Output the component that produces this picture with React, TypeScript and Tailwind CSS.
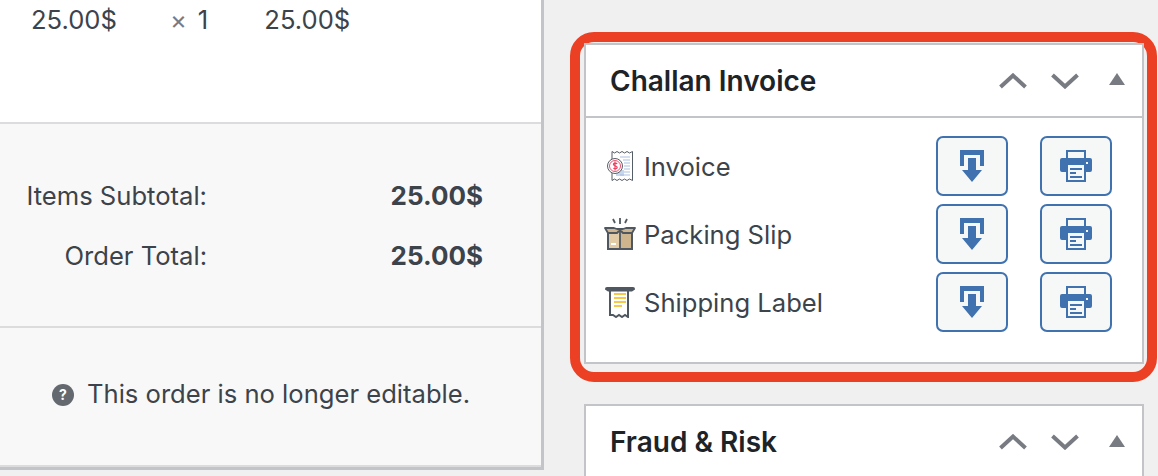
// ─── Icons ───────────────────────────────────────────────────────────────────

function DownloadIcon() {
  return (
    <svg width="24" height="32" viewBox="0 0 24 32">
      <path d="M0 0h24v16h-4V5H4v11H0z" fill="#3f72af" />
      <path d="M8 8h8v12h6L12 32 2 20h6z" fill="#3f72af" />
    </svg>
  )
}

function PrinterIcon() {
  return (
    <svg width="32" height="32" viewBox="0 0 32 32">
      <path d="M6 0h20v8h-2V2H8v6H6z" fill="#3f72af" />
      <path d="M2 8h28a2 2 0 0 1 2 2v10a2 2 0 0 1-2 2h-4v-7H6v7H2a2 2 0 0 1-2-2V10a2 2 0 0 1 2-2z" fill="#3f72af" />
      <rect x="26" y="12" width="2" height="2" fill="#f6f7f7" />
      <path d="M6 13h20v19H6z" fill="#3f72af" />
      <path d="M8 15h16v15H8z" fill="#f6f7f7" />
      <path d="M10 18h12v2H10zM10 22h6v2h-6zM10 26h12v2H10z" fill="#3f72af" />
    </svg>
  )
}

function InvoiceIcon() {
  return (
    <svg width="26" height="32" viewBox="0 0 26 32" fill="none">
      <path d="M5 1.500l2.500 1.500L10 1.500l2.500 1.500L15 1.500l2.500 1.500L20 1.500l2.500 1.500 3-1.500v29l-3-1.500-2.500 1.500-2.500-1.500-2.500 1.500-2.500-1.500L10 30.500l-2.500-1.500L5 30.500z" fill="#fff" stroke="#555d66" strokeWidth="1" />
      <path d="M9 20h8v6H9z" fill="#c6d6ec" />
      <path d="M13 7h10M16 10h7M17 13h6M17 16h6M17 19h6M17 22h6M13 25h10" stroke="#a9bfdf" strokeWidth="1" />
      <circle cx="8" cy="16" r="7.500" fill="#fff" stroke="#555d66" strokeWidth="1" />
      <circle cx="8" cy="16" r="5.500" fill="#fff" stroke="#ee5470" strokeWidth="1" />
      <path d="M10.200 13.800c-.8-1-3.800-1-3.800.6s3.800 1 3.800 2.900-3 1.700-3.800.7M8 11.500v9" stroke="#ee3f5f" strokeWidth="1.200" />
    </svg>
  )
}

function BoxIcon() {
  return (
    <svg width="32" height="32" viewBox="0 0 32 32" fill="none">
      <path d="M16 0v6M9 1l2 4M23 1l-2 4" stroke="#4f5760" strokeWidth="1.800" />
      <path d="M4 11h13v20H4z" fill="#e2cba7" />
      <path d="M17 11h11v20H17z" fill="#cfb58e" />
      <path d="M4 11h24v20H4z" stroke="#4f5760" strokeWidth="2" />
      <path d="M1 10h9l6 2 6-2h9l-3 5h-9l-3-3-3 3H4z" fill="#cfb58e" stroke="#4f5760" strokeWidth="1.800" strokeLinejoin="round" />
      <path d="M16 12v19" stroke="#4f5760" strokeWidth="1.800" />
      <rect x="7" y="25" width="5" height="2" fill="#fff" />
    </svg>
  )
}

function ShippingIcon() {
  return (
    <svg width="30" height="32" viewBox="0 0 30 32" fill="none">
      <path d="M5 3v26h3l3 2 3-2 3 2 3-2 3 2V3z" fill="#fff" stroke="#4f5760" strokeWidth="2" />
      <path d="M2 1h26a2 2 0 0 1 2 2v.500l-3 2H3l-3-2V3a2 2 0 0 1 2-2z" fill="#4f5760" />
      <path d="M9 8h12M9 12h12M9 16h12M9 20h8" stroke="#f7c948" strokeWidth="1.800" />
    </svg>
  )
}

function HelpIcon() {
  return (
    <svg width="22" height="22" viewBox="0 0 22 22">
      <circle cx="11" cy="11" r="11" fill="#646970" />
      <text x="11" y="16" textAnchor="middle" fontSize="14" fontWeight="700" fontFamily="Inter, sans-serif" fill="#fff">?</text>
    </svg>
  )
}

function ChevronUpIcon() {
  return (
    <svg width="28" height="16" viewBox="0 0 28 16" fill="none">
      <path d="M1.500 14L14 2.500 26.500 14" stroke="#787c82" strokeWidth="4" />
    </svg>
  )
}

function ChevronDownIcon() {
  return (
    <svg width="28" height="16" viewBox="0 0 28 16" fill="none">
      <path d="M1.500 2L14 13.500 26.500 2" stroke="#787c82" strokeWidth="4" />
    </svg>
  )
}

// ─── Pieces ──────────────────────────────────────────────────────────────────

function HeaderControls() {
  return (
    <div className="flex items-center">
      <ChevronUpIcon />
      <span className="ml-[24px]">
        <ChevronDownIcon />
      </span>
      <span className="mb-[3px] ml-[30px] mr-[17px] h-0 w-0 border-x-[8px] border-b-[12px] border-x-transparent border-b-[#787c82]" />
    </div>
  )
}

function ActionButton({ children }: { children: React.ReactNode }) {
  return (
    <button className="flex h-[60px] w-[72px] items-center justify-center rounded-[7px] border-2 border-[#3f72af] bg-[#f6f7f7]">
      {children}
    </button>
  )
}

const ROWS = [
  { label: 'Invoice', icon: <span className="ml-[3px] flex"><InvoiceIcon /></span> },
  { label: 'Packing Slip', icon: <BoxIcon /> },
  { label: 'Shipping Label', icon: <span className="ml-[1px] flex"><ShippingIcon /></span> },
]

function TotalRow({ label, value }: { label: string; value: string }) {
  return (
    <div className="flex items-center">
      <span className="w-[207px] text-right">{label}</span>
      <span className="ml-auto mr-[58px] text-[26px] font-bold">{value}</span>
    </div>
  )
}

// ─── App ─────────────────────────────────────────────────────────────────────

export default function App() {
  return (
    <div className="flex h-[476px] w-[1158px] overflow-hidden bg-[#f0f0f1] font-['Inter',sans-serif] text-[25.6px] text-[#3c434a]">
      {/* Order items column */}
      <div className="h-[470px] w-[544px] shrink-0 border-r-[3px] border-b-[3px] border-[#c3c4c7] bg-white">
        <div className="flex h-[124px] items-start border-b-2 border-[#dcdcde] pl-[31px] pt-[6px] leading-[28px]">
          <span>25.00$</span>
          <span className="ml-[53px] text-[#787c82]">×</span>
          <span className="ml-[11px]">1</span>
          <span className="ml-[56px]">25.00$</span>
        </div>
        <div className="flex h-[204px] flex-col gap-[30px] border-b-2 border-[#dcdcde] bg-[#f8f8f8] pt-[57px] leading-[30px]">
          <TotalRow label="Items Subtotal:" value="25.00$" />
          <TotalRow label="Order Total:" value="25.00$" />
        </div>
        <div className="flex h-[139px] items-center gap-[13px] border-b-2 border-[#dcdcde] bg-[#f8f8f8] pb-[4px] pl-[52px]">
          <HelpIcon />
          <span>This order is no longer editable.</span>
        </div>
      </div>

      {/* Sidebar column */}
      <div className="ml-[26px] flex flex-1 flex-col">
        <div className="mt-[32px] h-[350px] w-[587px] shrink-0 rounded-[24px] border-[10px] border-[#ec4025] pb-[8px] pl-[4px] pr-[3px] pt-[1px]">
          <div className="h-full border-2 border-[#c3c4c7] bg-white">
            <div className="flex h-[73px] items-center justify-between border-b-2 border-[#c3c4c7] pl-[24px]">
              <h2 className="text-[28px] font-semibold text-[#1d2327]">Challan Invoice</h2>
              <HeaderControls />
            </div>
            <div className="flex flex-col gap-[8px] pl-[18px] pr-[30px] pt-[18px]">
              {ROWS.map((row) => (
                <div key={row.label} className="flex items-center">
                  <span className="flex w-[40px]">{row.icon}</span>
                  <span className="pt-[3px]">{row.label}</span>
                  <div className="ml-auto flex gap-[32px]">
                    <ActionButton>
                      <DownloadIcon />
                    </ActionButton>
                    <ActionButton>
                      <PrinterIcon />
                    </ActionButton>
                  </div>
                </div>
              ))}
            </div>
          </div>
        </div>

        <div className="ml-[14px] mt-[22px] h-[100px] w-[560px] shrink-0 border-2 border-[#c3c4c7] bg-white">
          <div className="flex h-[72px] items-center justify-between pl-[24px]">
            <h2 className="text-[28px] font-semibold text-[#1d2327]">Fraud &amp; Risk</h2>
            <HeaderControls />
          </div>
        </div>
      </div>
    </div>
  )
}
